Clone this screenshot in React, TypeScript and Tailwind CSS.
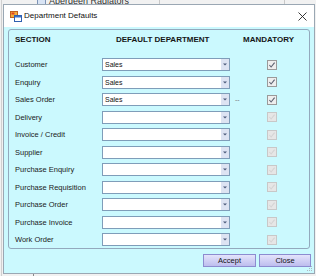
const rows = [
  { label: "Customer", value: "Sales", checked: true },
  { label: "Enquiry", value: "Sales", checked: true },
  { label: "Sales Order", value: "Sales", checked: true, dash: true },
  { label: "Delivery", value: "", checked: false },
  { label: "Invoice / Credit", value: "", checked: false },
  { label: "Supplier", value: "", checked: false },
  { label: "Purchase Enquiry", value: "", checked: false },
  { label: "Purchase Requisition", value: "", checked: false },
  { label: "Purchase Order", value: "", checked: false },
  { label: "Purchase Invoice", value: "", checked: false },
  { label: "Work Order", value: "", checked: false },
];

function TitleIcon() {
  return (
    <svg width="12" height="11" viewBox="0 0 12 11">
      <rect x="0.5" y="0.5" width="7" height="6" fill="#f0b040" stroke="#c06020" />
      <rect x="1.5" y="1.5" width="3" height="2" fill="#e04020" />
      <rect x="4.5" y="4.5" width="7" height="6" fill="#ffffff" stroke="#3060b0" />
      <rect x="5" y="5" width="6" height="1.5" fill="#3870c8" />
    </svg>
  );
}

function CheckBox({ checked }: { checked: boolean }) {
  return (
    <svg width="10" height="10" viewBox="0 0 10 10">
      <rect
        x="0.5"
        y="0.5"
        width="9"
        height="9"
        fill={checked ? "#eeeeee" : "#e6e6e6"}
        stroke={checked ? "#9a9a9a" : "#c8c8c8"}
      />
      <path
        d="M2.4 5 L4.1 7 L7.6 2.7"
        fill="none"
        stroke={checked ? "#5a6070" : "#d4d4d4"}
        strokeWidth="1.1"
      />
    </svg>
  );
}

function Combo({ value }: { value: string }) {
  return (
    <div className="flex h-[13px] w-[128px] items-stretch border border-[#7f9db9] bg-white">
      <div className="flex flex-1 items-center pl-[2px] text-[7px] leading-none text-[#111]">
        {value}
      </div>
      <div className="flex w-[8px] items-center justify-center bg-[#dde3f2]">
        <svg width="4" height="3" viewBox="0 0 4 3">
          <path d="M0 0.5 H4 L2 2.5 Z" fill="#4d5b7a" />
        </svg>
      </div>
    </div>
  );
}

export default function App() {
  return (
    <div className="relative h-[276px] w-[316px] overflow-hidden bg-[#f1f1f1] font-['Liberation_Sans',Arial,sans-serif]">
      {/* app behind the dialog */}
      <div className="absolute left-[37px] top-[-5px] flex items-center gap-[3px]">
        <div className="h-[8px] w-[9px] border border-[#7d93b5] bg-[#d9e4f4]" />
        <span className="text-[9px] text-[#333]">Aberdeen Radiators</span>
      </div>
      <div className="absolute left-[159px] top-0 h-[4px] w-px bg-[#c8c8c8]" />
      <div className="absolute left-[284px] top-0 h-[4px] w-px bg-[#c8c8c8]" />
      <div className="absolute left-[1px] top-0 h-full w-px bg-[#d0d0d0]" />
      <div className="absolute left-[33px] top-[274px] h-[2px] w-px bg-[#888]" />

      <div className="pl-[3px] pt-[4px]">
        <div className="relative flex h-[270px] w-[312px] flex-col border border-[#9aa7b3] bg-white">
          <div className="flex h-[22px] items-center bg-white pl-[6px] pr-[6px]">
            <TitleIcon />
            <span className="ml-[2px] text-[8px] text-[#111]">Department Defaults</span>
            <svg className="ml-auto mr-[1px]" width="9" height="9" viewBox="0 0 9 9">
              <path d="M0.5 0.5 L8.5 8.5 M8.5 0.5 L0.5 8.5" stroke="#222" strokeWidth="0.9" />
            </svg>
          </div>

          <div className="flex flex-1 flex-col bg-[#cbf9fe] pt-[2px]">
            <div className="mx-[4px] h-[220px] rounded-[3px] border border-[#93a9bd]">
              <div className="flex h-[20px] items-center pl-[6px] text-[8px] font-bold text-[#161616]">
                <span className="w-[101px]">SECTION</span>
                <span className="w-[127px]">DEFAULT DEPARTMENT</span>
                <span>MANDATORY</span>
              </div>
              <div className="pt-[6px]">
                {rows.map((row) => (
                  <div key={row.label} className="flex h-[17.5px] items-center pl-[6px]">
                    <span className="w-[87px] text-[7.5px] text-[#1c1c1c]">{row.label}</span>
                    <Combo value={row.value} />
                    <span className="w-[37px] pl-[5px] text-[7px] text-[#777]">
                      {row.dash ? "--" : ""}
                    </span>
                    <CheckBox checked={row.checked} />
                  </div>
                ))}
              </div>
            </div>

            <div className="mt-[5px] flex justify-end gap-[3px] pr-[3px]">
              <button className="h-[13px] w-[53px] border border-[#8c8cd0] bg-gradient-to-b from-[#e4e4fb] to-[#bdbdee] text-[7.5px] leading-none text-[#111]">
                Accept
              </button>
              <button className="h-[13px] w-[52px] border border-[#8c8cd0] bg-gradient-to-b from-[#e4e4fb] to-[#bdbdee] text-[7.5px] leading-none text-[#111]">
                Close
              </button>
            </div>
          </div>

          <svg className="absolute bottom-[1px] right-[1px]" width="6" height="6" viewBox="0 0 6 6">
            <rect x="4" y="0" width="1" height="1" fill="#b0b8c0" />
            <rect x="2" y="2" width="1" height="1" fill="#b0b8c0" />
            <rect x="4" y="2" width="1" height="1" fill="#b0b8c0" />
            <rect x="0" y="4" width="1" height="1" fill="#b0b8c0" />
            <rect x="2" y="4" width="1" height="1" fill="#b0b8c0" />
            <rect x="4" y="4" width="1" height="1" fill="#b0b8c0" />
          </svg>
        </div>
      </div>
    </div>
  );
}
